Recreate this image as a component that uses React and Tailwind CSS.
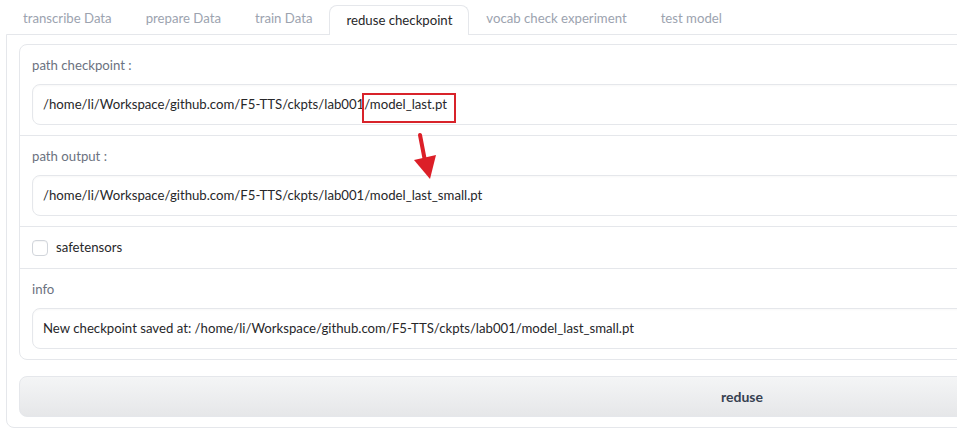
import React from "react";

const tabs = [
  "transcribe Data",
  "prepare Data",
  "train Data",
  "reduse checkpoint",
  "vocab check experiment",
  "test model",
];

function Field({ label, value }) {
  return (
    <div className="px-3 pt-[10px] pb-[10px]">
      <div className="h-5 leading-5 text-[#6b7280]">{label}</div>
      <div className="mt-[9px] h-[41px] flex items-center rounded-lg border border-[#e5e7eb] bg-white px-[10px] text-[#27272a] shadow-[inset_0_1px_2px_rgba(0,0,0,0.03)]">
        {value}
      </div>
    </div>
  );
}

export default function App() {
  return (
    <div className="relative w-[957px] h-[430px] overflow-hidden bg-white font-['Lato',sans-serif] text-[13.2px]">
      <div className="w-[1478px] pl-[6px]">
        {/* Tabs */}
        <div className="flex items-end h-[34px]">
          {tabs.map((t) => {
            const active = t === "reduse checkpoint";
            return active ? (
              <div
                key={t}
                className="relative z-10 -mb-px h-[30px] flex items-center px-4 rounded-t-lg border border-b-0 border-[#e5e7eb] bg-white text-[#27272a]"
              >
                {t}
              </div>
            ) : (
              <div
                key={t}
                className="h-[30px] flex items-center px-[17px] text-[#9ca3af]"
              >
                {t}
              </div>
            );
          })}
        </div>

        {/* Panel */}
        <div className="border border-[#e5e7eb] rounded-b-lg px-3 pt-[9px] pb-[10px] flex flex-col gap-4">
          <div className="rounded-lg border border-[#e5e7eb] bg-white flex flex-col divide-y divide-[#e5e7eb]">
            <Field
              label="path checkpoint :"
              value="/home/li/Workspace/github.com/F5-TTS/ckpts/lab001/model_last.pt"
            />
            <Field
              label="path output :"
              value="/home/li/Workspace/github.com/F5-TTS/ckpts/lab001/model_last_small.pt"
            />
            <div className="h-[42px] px-3 flex items-center gap-2">
              <div className="w-4 h-4 rounded-[4px] border border-[#d1d5db] bg-white shadow-[inset_0_1px_1px_rgba(0,0,0,0.04)]" />
              <span className="text-[#27272a]">safetensors</span>
            </div>
            <Field
              label="info"
              value="New checkpoint saved at: /home/li/Workspace/github.com/F5-TTS/ckpts/lab001/model_last_small.pt"
            />
          </div>

          <button className="h-[41px] w-full rounded-lg border border-[#e5e7eb] bg-gradient-to-b from-[#f4f5f6] to-[#e6e7e9] text-[14px] font-bold text-[#374151]">
            reduse
          </button>
        </div>
      </div>

      {/* Annotations */}
      <div className="absolute left-[362px] top-[93px] w-[94px] h-[30px] border-2 border-[#d8232a]" />
      <svg
        className="absolute left-0 top-0"
        width="957"
        height="430"
        viewBox="0 0 957 430"
      >
        <line x1="420" y1="135" x2="425" y2="161" stroke="#dc1f28" strokeWidth="4" strokeLinecap="round" />
        <polygon points="414,160 436,155 430,179" fill="#dc1f28" />
      </svg>
    </div>
  );
}
